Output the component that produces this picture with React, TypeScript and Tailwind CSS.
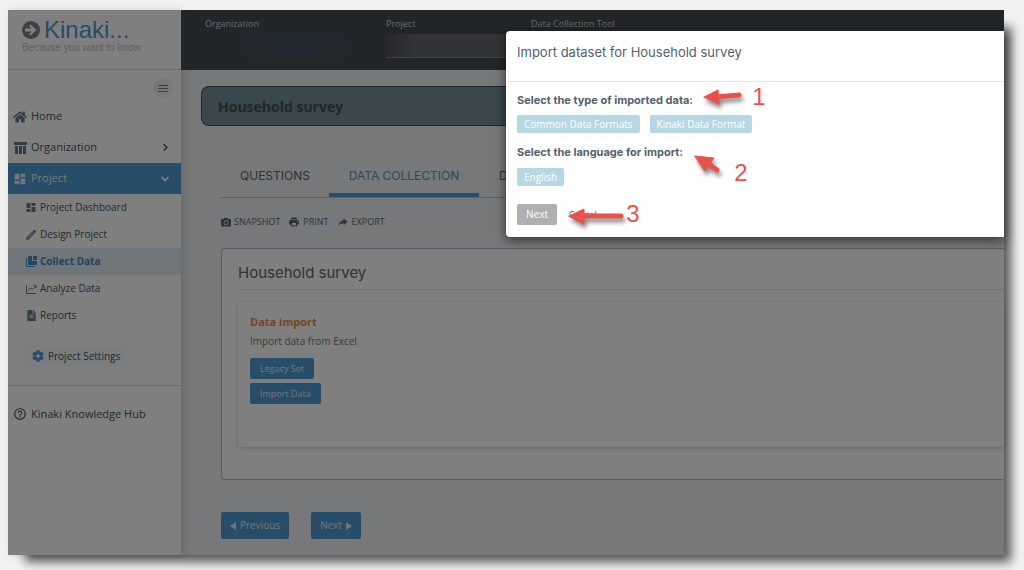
import type { ReactNode } from "react";
import { ChevronDown, ChevronRight } from "lucide-react";
import { FaCamera, FaCog, FaFileAlt, FaHome } from "react-icons/fa";
import { ImPencil } from "react-icons/im";
import { IoMdShareAlt } from "react-icons/io";
import { MdDashboard, MdHelpOutline, MdLocalPrintshop } from "react-icons/md";

const SUB_ITEMS = [
  { label: "Project Dashboard", icon: <MdDashboard size={13} /> },
  { label: "Design Project", icon: <ImPencil size={10} /> },
  { label: "Collect Data", icon: <CollectIcon />, active: true },
  { label: "Analyze Data", icon: <AnalyzeIcon /> },
  { label: "Reports", icon: <FaFileAlt size={11} /> },
];

function OrganizationIcon() {
  return (
    <svg width="13" height="12" viewBox="0 0 13 12" fill="currentColor">
      <path d="M0 0h13v3H0zM1 4h3v8H1zM5 4h3v8H5zM9 4h3v8H9z" />
    </svg>
  );
}

function CollectIcon() {
  return (
    <svg width="11" height="11" viewBox="0 0 11 11" fill="currentColor">
      <path d="M0 2h1v8h8v1H0z" />
      <path d="M3 0h3v5h5v3a1 1 0 0 1-1 1H3a1 1 0 0 1-1-1V1a1 1 0 0 1 1-1z" />
      <path d="M7 0h3a1 1 0 0 1 1 1v3H7z" />
    </svg>
  );
}

function AnalyzeIcon() {
  return (
    <svg width="11" height="10" viewBox="0 0 11 10" fill="none" stroke="currentColor">
      <path d="M.5 1v8.5H10" />
      <path d="M2 7l2.500-3 2 1.500L10 2M7.500 1.500H10V4" />
    </svg>
  );
}

function Logo() {
  return (
    <div className="h-[60px] border-b border-[#dcdcdc] pt-2 pl-[14px] font-['Liberation_Sans',sans-serif]">
      <div className="flex items-center gap-1">
        <svg width="18" height="18" viewBox="0 0 18 18">
          <circle cx="9" cy="9" r="9" fill="#808080" />
          <path d="M3 7.500h6.500L7 5l1.500-1.500L14.500 9l-6 5.500L7 13l2.500-2.500H3z" fill="#fff" />
        </svg>
        <span className="text-2xl leading-6 text-[#5098cc]">Kinaki...</span>
      </div>
      <p className="text-[10px] leading-3 text-[#c0c0c0]">Because you want to know</p>
    </div>
  );
}

function NavItem({ icon, label, chevron, active }: { icon: ReactNode; label: string; chevron?: ReactNode; active?: boolean }) {
  return (
    <a
      href="#"
      className={`flex h-[31px] items-center gap-1 pr-[10px] pl-[5px] text-[11px] ${active ? "bg-[#509ad0] text-[#e8f0f5]" : "text-[#46525a]"}`}
    >
      <span className={`flex w-[14px] justify-center ${active ? "" : "text-[#5f7a88]"}`}>{icon}</span>
      <span className="flex-1">{label}</span>
      {chevron}
    </a>
  );
}

function Sidebar() {
  return (
    <aside className="w-[173px] shrink-0 bg-white shadow-[2px_0_8px_rgba(0,0,0,0.15)]">
      <Logo />
      <div className="flex h-[31px] justify-end pt-2 pr-2">
        <button aria-label="Toggle menu" className="flex size-[20px] flex-col items-center justify-center gap-[2px] rounded-full bg-[#eef0f3]">
          <span className="h-px w-[10px] bg-[#708088]" />
          <span className="h-px w-[10px] bg-[#708088]" />
          <span className="h-px w-[10px] bg-[#708088]" />
        </button>
      </div>
      <nav>
        <NavItem icon={<FaHome size={14} />} label="Home" />
        <NavItem icon={<OrganizationIcon />} label="Organization" chevron={<ChevronRight size={11} strokeWidth={3} />} />
        <NavItem icon={<MdDashboard size={14} />} label="Project" active chevron={<ChevronDown size={12} strokeWidth={4} />} />
        <ul>
          {SUB_ITEMS.map((item) => (
            <li key={item.label}>
              <a
                href="#"
                className={`flex h-[27px] items-center gap-[3px] pl-[17px] text-[10px] ${
                  item.active ? "bg-[#dfebf2] font-bold text-[#4488b8]" : "text-[#46525a]"
                }`}
              >
                <span className={`flex w-3 justify-center ${item.active ? "" : "text-[#5f7a88]"}`}>{item.icon}</span>
                {item.label}
              </a>
            </li>
          ))}
        </ul>
      </nav>
      <div className="border-b border-[#dcdcdc] pt-4 pb-[18px] pl-[17px]">
        <button className="flex h-[22px] items-center gap-1 rounded-sm bg-[#f7f8fb] px-[7px] text-[10px] text-[#46525a]">
          <FaCog size={12} className="text-[#509ad0]" />
          Project Settings
        </button>
      </div>
      <a href="#" className="flex items-center gap-1 pt-5 pl-[5px] text-[11px] leading-4 text-[#46525a]">
        <MdHelpOutline size={14} />
        Kinaki Knowledge Hub
      </a>
    </aside>
  );
}

function TopBar() {
  return (
    <header className="flex h-[60px] bg-[#444c52] pt-2 pl-6 text-[9px] leading-3 text-[#cfd2d4]">
      <div className="w-[181px]">
        Organization
        <div className="mt-1 h-6 bg-linear-to-r from-[#444c52] via-[#42505f] to-[#444c52]" />
      </div>
      <div className="w-[145px]">
        Project
        <div className="mt-1 h-6 border-b border-[#808488] bg-linear-to-r from-[#4c5258] to-[#65666a] to-20%" />
      </div>
      <div>Data Collection Tool</div>
    </header>
  );
}

function Tabs() {
  return (
    <nav className="mt-7 ml-5 flex h-[44px] border-b border-[#b9bdd0] font-['Inter',sans-serif] text-[12px] text-[#5b656b]">
      <a href="#" className="flex w-[108px] items-center justify-center">QUESTIONS</a>
      <a href="#" className="flex w-[150px] items-center justify-center border-b-4 border-[#509ad0] pt-1 text-[#5594c0]">
        DATA COLLECTION
      </a>
      <a href="#" className="flex items-center px-5">D</a>
    </nav>
  );
}

function Action({ icon, label }: { icon: ReactNode; label: string }) {
  return (
    <button className="flex items-center gap-[3px] text-[9px] text-[#5b6b74]">
      {icon}
      {label}
    </button>
  );
}

function ImportCard() {
  return (
    <section className="mt-[18px] ml-5 rounded-l-sm border border-r-0 border-[#b4b9cf] bg-white pb-8 pl-4">
      <h2 className="border-b border-[#e4e4e4] pt-3 pb-1 font-['Inter',sans-serif] text-[15px] leading-6 text-[#5a676f]">Household survey</h2>
      <div className="mt-3 flex h-[145px] flex-col items-start pt-3 pl-3 shadow-[0_1px_4px_rgba(0,0,0,0.2)]">
        <h3 className="text-[11px] leading-4 font-bold text-[#e88b45]">Data import</h3>
        <p className="mt-[3px] text-[10px] leading-4 text-[#6c7a82]">Import data from Excel</p>
        <button className="mt-[9px] h-[21px] rounded-xs bg-[#509ad0] px-[10px] text-[9px] text-[#e3eaef]">Legacy Set</button>
        <button className="mt-1 h-[21px] rounded-xs bg-[#509ad0] px-[10px] text-[9px] text-[#e3eaef]">Import Data</button>
      </div>
    </section>
  );
}

function Annotations() {
  return (
    <svg className="pointer-events-none absolute top-0 left-0" width="280" height="206" viewBox="0 0 280 206" fill="#e8524c" stroke="#e8524c">
      <g strokeWidth="5" strokeLinecap="round" className="drop-shadow-[2px_4px_2px_rgba(0,0,0,0.45)]">
        <path d="M210 66L233 64" />
        <path d="M198 66l14-7 1 14z" strokeWidth="1" />
        <path d="M201 132l10 7" />
        <path d="M189 125l19 2-9 13z" strokeWidth="1" />
        <path d="M76 185h39" />
        <path d="M63 185l15-7v15z" strokeWidth="1" />
      </g>
      <g stroke="none" textAnchor="middle" className="font-['Liberation_Sans',sans-serif] text-2xl">
        <text x="253" y="74">1</text>
        <text x="235" y="150">2</text>
        <text x="127" y="191">3</text>
      </g>
    </svg>
  );
}

function ImportDialog() {
  return (
    <div
      role="dialog"
      aria-label="Import dataset"
      className="absolute top-[21px] right-0 w-1/2 rounded-l-sm bg-white pb-3 font-['Inter',sans-serif] text-[#53626c] shadow-[0_3px_12px_rgba(0,0,0,0.6)]"
    >
      <h2 className="h-[51px] border-b border-[#e8e8e8] px-[11px] pt-3 text-[13px] leading-[18px]">Import dataset for Household survey</h2>
      <div className="px-[11px] pt-[10px]">
        <p className="text-[11px] leading-4 font-bold">Select the type of imported data:</p>
        <div className="mt-[7px] flex gap-[10px] font-['Open_Sans',sans-serif] text-[10px] text-white">
          <button className="h-[18px] rounded-xs bg-[#b5d8e4] px-[7px]">Common Data Formats</button>
          <button className="h-[18px] rounded-xs bg-[#b5d8e4] px-[7px]">Kinaki Data Format</button>
        </div>
        <p className="mt-[11px] text-[11px] leading-4 font-bold">Select the language for import:</p>
        <button className="mt-2 block h-[18px] rounded-xs bg-[#b5d8e4] px-[7px] font-['Open_Sans',sans-serif] text-[10px] text-white">English</button>
        <div className="mt-[18px] flex items-center gap-3 font-['Open_Sans',sans-serif] text-[10px]">
          <button className="h-[21px] rounded-xs bg-[#b0b0b0] px-[9px] text-white">Next</button>
          <a href="#" className="text-[9px]">Cancel</a>
        </div>
      </div>
      <Annotations />
    </div>
  );
}

export default function App() {
  return (
    <div className="min-h-screen bg-[#f2f2f2] pt-[10px] pr-5 pb-[15px] pl-2 font-['Open_Sans',sans-serif]">
      <div className="relative shadow-[12px_12px_10px_-5px_rgba(0,0,0,0.65)]">
        <div className="flex bg-[#eef0f3]">
          <Sidebar />
          <main className="min-w-0 flex-1 pb-4">
            <TopBar />
            <div className="pt-4 pl-5">
              <h1 className="flex h-[40px] items-center rounded-l-lg border border-r-0 border-[#444c52] bg-[#748e98] px-4 text-[14px] font-bold text-[#444c52]">
                Household survey
              </h1>
              <Tabs />
              <div className="mt-4 ml-5 flex h-4 items-center gap-2">
                <Action icon={<FaCamera size={10} />} label="SNAPSHOT" />
                <Action icon={<MdLocalPrintshop size={12} />} label="PRINT" />
                <Action icon={<IoMdShareAlt size={12} />} label="EXPORT" />
              </div>
              <ImportCard />
              <div className="mt-8 ml-5 flex gap-[22px] text-[10px] text-[#e3eaef]">
                <button className="flex h-[27px] items-center gap-1 rounded-xs bg-[#509ad0] px-[9px]">
                  <svg width="6" height="8" viewBox="0 0 6 8" fill="currentColor">
                    <path d="M6 0v8L0 4z" />
                  </svg>
                  Previous
                </button>
                <button className="flex h-[27px] items-center gap-1 rounded-xs bg-[#509ad0] px-[9px]">
                  Next
                  <svg width="6" height="8" viewBox="0 0 6 8" fill="currentColor">
                    <path d="M0 0v8l6-4z" />
                  </svg>
                </button>
              </div>
            </div>
          </main>
        </div>
        <div className="absolute inset-0 bg-black/50" />
        <ImportDialog />
      </div>
    </div>
  );
}
